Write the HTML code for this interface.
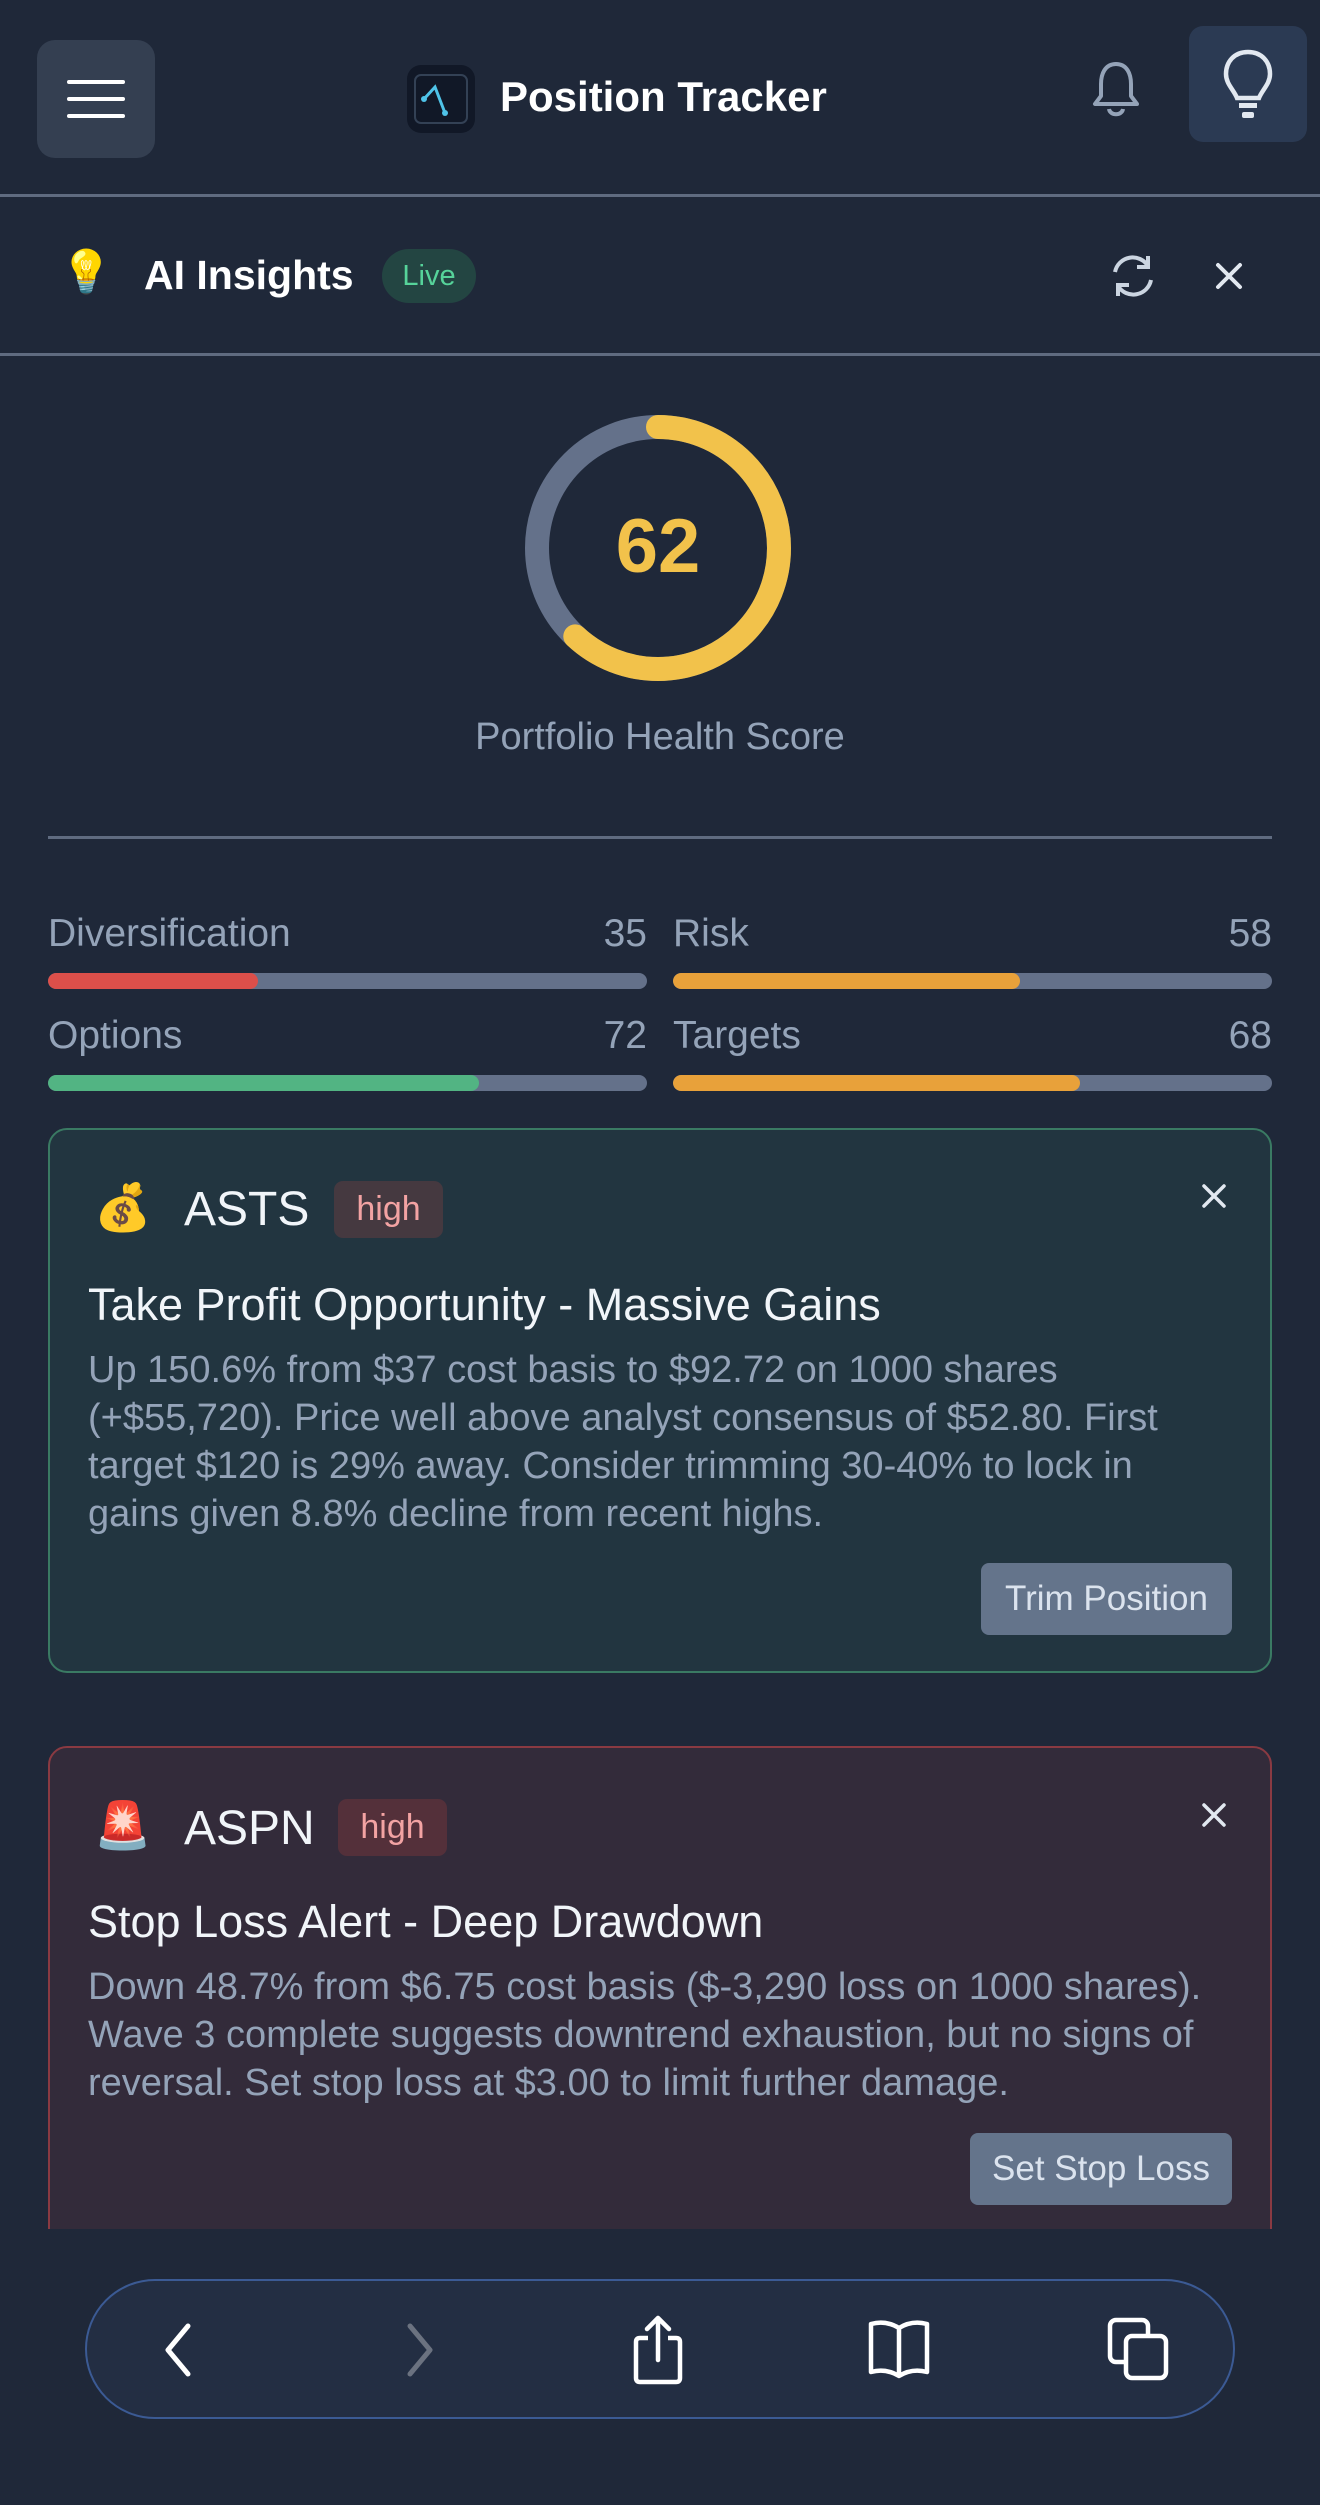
<!DOCTYPE html>
<html><head><meta charset="utf-8">
<style>
*{margin:0;padding:0;box-sizing:border-box}
html,body{width:1320px;height:2505px;background:#1f2839;overflow:hidden;font-family:"Liberation Sans","Noto Sans CJK SC",sans-serif;color:#f1f5f9}
.a{position:absolute}
.line{position:absolute;left:0;width:1320px;height:3px;background:#5f6b80}
.lbl{font-size:39px;color:#94a3b8;white-space:nowrap}
.bar{position:absolute;height:16px;border-radius:8px;background:#64718a;overflow:hidden}
.bar i{position:absolute;left:0;top:0;bottom:0;border-radius:8px}
.card{position:absolute;left:48px;width:1224px;border-radius:19px;border:2px solid}
.tick{font-size:48px;color:#f1f5f9;white-space:nowrap}
.badge{position:absolute;height:57px;border-radius:9px;font-size:34px;color:#f3a3a3;line-height:57px;text-align:center}
.ttl{font-size:45px;color:#f1f5f9;white-space:nowrap}
.body{font-size:38px;line-height:48px;color:#94a3b8;white-space:nowrap}
.btn{position:absolute;height:72px;border-radius:8px;background:#64748b;color:#dbe3ee;font-size:35px;line-height:72px;text-align:center}
</style></head><body>

<!-- header -->
<div class="a" style="left:37px;top:40px;width:118px;height:118px;border-radius:18px;background:#343f51"></div>
<div class="a" style="left:67px;top:80px;width:58px;height:4px;background:#fff;border-radius:2px"></div>
<div class="a" style="left:67px;top:97px;width:58px;height:4px;background:#fff;border-radius:2px"></div>
<div class="a" style="left:67px;top:114px;width:58px;height:4px;background:#fff;border-radius:2px"></div>

<div class="a" style="left:407px;top:65px;width:68px;height:68px;border-radius:14px;background:#111827"></div>
<svg class="a" style="left:407px;top:65px" width="68" height="68" viewBox="0 0 68 68"><rect x="8" y="10" width="52" height="48" rx="6" fill="none" stroke="#334155" stroke-width="2"/><path d="M17 34 L28 22 L38 48" fill="none" stroke="#4fc3e8" stroke-width="3" stroke-linecap="round"/><circle cx="17" cy="34" r="3" fill="#4fc3e8"/><circle cx="38" cy="48" r="3" fill="#4fc3e8"/></svg>
<div class="a" style="left:500px;top:73px;font-size:42px;font-weight:bold;color:#fff;white-space:nowrap">Position Tracker</div>

<svg class="a" style="left:1088px;top:58px" width="56" height="64" viewBox="0 0 56 64"><path d="M28 6 C17 6 13 16 13 26 L13 38 L7 46 L49 46 L43 38 L43 26 C43 16 39 6 28 6 Z" fill="none" stroke="#94a3b8" stroke-width="4" stroke-linejoin="round"/><path d="M21 51 C22 58 34 58 35 51" fill="none" stroke="#94a3b8" stroke-width="4"/></svg>

<div class="a" style="left:1189px;top:26px;width:118px;height:116px;border-radius:14px;background:#2b3a53"></div>
<svg class="a" style="left:1218px;top:48px" width="60" height="72" viewBox="0 0 60 72"><path d="M30 4 C16 4 8 14 8 26 C8 36 16 42 19 50 L41 50 C44 42 52 36 52 26 C52 14 44 4 30 4 Z" fill="none" stroke="#e2e8f0" stroke-width="4.5"/><rect x="21" y="55" width="18" height="5" fill="#e2e8f0"/><rect x="24" y="64" width="12" height="6" rx="2" fill="#e2e8f0"/></svg>

<div class="line" style="top:194px"></div>

<!-- AI Insights -->
<div class="a" style="left:60px;top:248px;font-size:42px">💡</div>
<div class="a" style="left:144px;top:252px;font-size:41px;font-weight:bold;color:#fff;white-space:nowrap">AI Insights</div>
<div class="a" style="left:382px;top:249px;width:94px;height:54px;border-radius:27px;background:#234542;color:#56d39a;font-size:29px;line-height:54px;text-align:center">Live</div>
<svg class="a" style="left:1107px;top:252px" width="52" height="48" viewBox="0 0 52 48"><path d="M8 20 A18 18 0 0 1 41 14" fill="none" stroke="#cbd5e1" stroke-width="4"/><path d="M41 4 L41 15 L30 15" fill="none" stroke="#cbd5e1" stroke-width="4"/><path d="M44 28 A18 18 0 0 1 11 34" fill="none" stroke="#cbd5e1" stroke-width="4"/><path d="M11 44 L11 33 L22 33" fill="none" stroke="#cbd5e1" stroke-width="4"/></svg>
<svg class="a" style="left:1215px;top:262px" width="28" height="28" viewBox="0 0 28 28"><path d="M3 3 L25 25 M25 3 L3 25" stroke="#e2e8f0" stroke-width="4" stroke-linecap="round"/></svg>

<div class="line" style="top:353px"></div>

<!-- ring -->
<svg class="a" style="left:518px;top:408px" width="280" height="280" viewBox="0 0 280 280">
<circle cx="140" cy="140" r="121" fill="none" stroke="#64718a" stroke-width="24"/>
<circle cx="140" cy="140" r="121" fill="none" stroke="#f2c24b" stroke-width="24" stroke-linecap="round" stroke-dasharray="471 1000" transform="rotate(-90 140 140)"/>
</svg>
<div class="a" style="left:518px;top:503px;width:280px;text-align:center;font-size:76px;font-weight:bold;color:#f2c24b">62</div>
<div class="a lbl" style="left:0;width:1320px;text-align:center;top:716px;font-size:38px">Portfolio Health Score</div>

<div class="a" style="left:48px;top:836px;width:1224px;height:3px;background:#5f6b80"></div>

<!-- metrics -->
<div class="a lbl" style="left:48px;top:912px">Diversification</div>
<div class="a lbl" style="left:590px;top:912px;width:57px;text-align:right">35</div>
<div class="bar" style="left:48px;top:973px;width:599px"><i style="width:210px;background:#dc4f4a"></i></div>
<div class="a lbl" style="left:673px;top:912px">Risk</div>
<div class="a lbl" style="left:1200px;top:912px;width:72px;text-align:right">58</div>
<div class="bar" style="left:673px;top:973px;width:599px"><i style="width:347px;background:#e8a13a"></i></div>

<div class="a lbl" style="left:48px;top:1014px">Options</div>
<div class="a lbl" style="left:590px;top:1014px;width:57px;text-align:right">72</div>
<div class="bar" style="left:48px;top:1075px;width:599px"><i style="width:431px;background:#52b483"></i></div>
<div class="a lbl" style="left:673px;top:1014px">Targets</div>
<div class="a lbl" style="left:1200px;top:1014px;width:72px;text-align:right">68</div>
<div class="bar" style="left:673px;top:1075px;width:599px"><i style="width:407px;background:#e8a13a"></i></div>

<!-- card 1 -->
<div class="card" style="top:1128px;height:545px;background:#223540;border-color:#3a7a63"></div>
<div class="a" style="left:94px;top:1180px;font-size:46px">💰</div>
<div class="a tick" style="left:184px;top:1182px">ASTS</div>
<div class="badge" style="left:334px;top:1181px;width:109px;background:#453940">high</div>
<svg class="a" style="left:1202px;top:1184px" width="24" height="24" viewBox="0 0 24 24"><path d="M2 2 L22 22 M22 2 L2 22" stroke="#e2e8f0" stroke-width="3.5" stroke-linecap="round"/></svg>
<div class="a ttl" style="left:88px;top:1279px">Take Profit Opportunity - Massive Gains</div>
<div class="a body" style="left:88px;top:1346px">Up 150.6% from $37 cost basis to $92.72 on 1000 shares<br>(+$55,720). Price well above analyst consensus of $52.80. First<br>target $120 is 29% away. Consider trimming 30-40% to lock in<br>gains given 8.8% decline from recent highs.</div>
<div class="btn" style="left:981px;top:1563px;width:251px">Trim Position</div>

<!-- card 2 -->
<div class="a" style="left:0;top:1746px;width:1320px;height:483px;overflow:hidden">
<div class="card" style="top:0;height:560px;background:#332b3a;border-color:#8a3a42"></div>
<div class="a" style="left:94px;top:52px;font-size:46px">🚨</div>
<div class="a tick" style="left:184px;top:55px">ASPN</div>
<div class="badge" style="left:338px;top:53px;width:109px;background:#54303a">high</div>
<svg class="a" style="left:1202px;top:57px" width="24" height="24" viewBox="0 0 24 24"><path d="M2 2 L22 22 M22 2 L2 22" stroke="#e2e8f0" stroke-width="3.5" stroke-linecap="round"/></svg>
<div class="a ttl" style="left:88px;top:150px">Stop Loss Alert - Deep Drawdown</div>
<div class="a body" style="left:88px;top:217px">Down 48.7% from $6.75 cost basis ($-3,290 loss on 1000 shares).<br>Wave 3 complete suggests downtrend exhaustion, but no signs of<br>reversal. Set stop loss at $3.00 to limit further damage.</div>
<div class="btn" style="left:970px;top:387px;width:262px">Set Stop Loss</div>
</div>

<!-- bottom nav -->
<div class="a" style="left:85px;top:2279px;width:1150px;height:140px;border-radius:70px;background:#232e43;border:2px solid #3b5a94"></div>
<svg class="a" style="left:156px;top:2322px" width="40" height="56" viewBox="0 0 40 56"><path d="M32 4 L12 28 L32 52" fill="none" stroke="#fff" stroke-width="5" stroke-linecap="round" stroke-linejoin="round"/></svg>
<svg class="a" style="left:402px;top:2322px" width="40" height="56" viewBox="0 0 40 56"><path d="M8 4 L28 28 L8 52" fill="none" stroke="#6b7280" stroke-width="5" stroke-linecap="round" stroke-linejoin="round"/></svg>
<svg class="a" style="left:630px;top:2314px" width="56" height="72" viewBox="0 0 56 72"><path d="M18 24 L10 24 Q6 24 6 28 L6 64 Q6 68 10 68 L46 68 Q50 68 50 64 L50 28 Q50 24 46 24 L38 24" fill="none" stroke="#fff" stroke-width="4.5"/><path d="M28 46 L28 4 M17 15 L28 4 L39 15" fill="none" stroke="#fff" stroke-width="4.5" stroke-linecap="round" stroke-linejoin="round"/></svg>
<svg class="a" style="left:866px;top:2318px" width="66" height="62" viewBox="0 0 66 62"><path d="M33 10 Q20 2 5 6 L5 54 Q20 50 33 58 Q46 50 61 54 L61 6 Q46 2 33 10 Z M33 10 L33 58" fill="none" stroke="#fff" stroke-width="4.5" stroke-linejoin="round"/></svg>
<svg class="a" style="left:1106px;top:2316px" width="64" height="66" viewBox="0 0 64 66"><rect x="4" y="4" width="38" height="42" rx="6" fill="none" stroke="#fff" stroke-width="4.5"/><rect x="20" y="20" width="40" height="42" rx="6" fill="#232e43" stroke="#fff" stroke-width="4.5"/></svg>

</body></html>
